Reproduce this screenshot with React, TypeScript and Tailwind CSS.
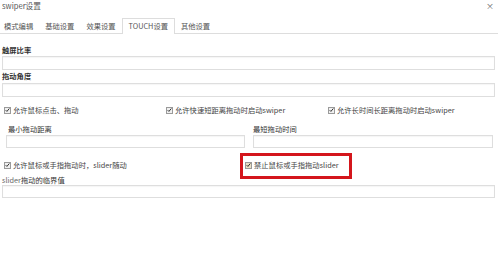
import React from 'react'

const font = { fontFamily: '"Noto Sans CJK SC", "Noto Sans", sans-serif' }

function Check({ label, tint = false }: { label: string; tint?: boolean }) {
  return (
    <div className="flex items-center h-[12px] text-[7.3px] leading-[12px] text-[#444]">
      <span
        className={`w-[7px] h-[7px] mr-[2px] flex items-center justify-center border border-[#9a9a9a] ${
          tint ? 'bg-[#e9dfc4]' : 'bg-[#f0f0f0]'
        }`}
      >
        <svg width="6" height="6" viewBox="0 0 6 6">
          <path d="M0.8 3.2 L2.3 4.7 L5.2 1.2" fill="none" stroke="#222" strokeWidth="1.1" />
        </svg>
      </span>
      <span className="whitespace-nowrap">{label}</span>
    </div>
  )
}

function Field({ className = '' }: { className?: string }) {
  return <div className={`border border-[#dedede] bg-white shadow-[inset_0_1px_1px_rgba(0,0,0,0.04)] ${className}`} />
}

export default function App() {
  const tabs = ['模式编辑', '基础设置', '效果设置', 'TOUCH设置', '其他设置']

  return (
    <div className="w-[500px] h-[271px] bg-white overflow-hidden" style={font}>
      {/* Title */}
      <div className="flex justify-between items-center h-[11px] pl-[2px] pr-[6px] text-[7.6px] text-[#555]">
        <span>swiper设置</span>
        <span className="text-[8px] text-[#666] leading-none">×</span>
      </div>

      {/* Tabs */}
      <div className="mt-[8px] h-[15px] border-b border-[#dddddd] flex ml-[-2px] mr-[2px]">
        {tabs.map((t) => (
          <div
            key={t}
            className={`px-[6px] h-[15px] leading-[14px] text-[7.3px] text-[#555] whitespace-nowrap ${
              t === 'TOUCH设置' ? 'bg-white border border-b-0 border-[#dddddd] h-[16px] -mt-px px-[5px]' : ''
            }`}
          >
            {t}
          </div>
        ))}
      </div>

      <div className="px-[2px]">
        <div className="mt-[11px] h-[10px] leading-[10px] text-[7.3px] font-bold text-[#333]">触屏比率</div>
        <Field className="mt-[1px] h-[14px] w-[493px]" />

        <div className="mt-[1px] h-[10px] leading-[10px] text-[7.3px] font-bold text-[#333]">拖动角度</div>
        <Field className="mt-[2px] h-[14px] w-[493px]" />

        <div className="mt-[7px] grid grid-cols-[162px_162px_162px] pl-[2px]">
          <Check label="允许鼠标点击、拖动" />
          <Check label="允许快速短距离拖动时启动swiper" />
          <Check label="允许长时间长距离拖动时启动swiper" />
        </div>

        <div className="mt-[8px] grid grid-cols-[247px_247px]">
          <div className="px-[4px]">
            <div className="pl-[2px] h-[10px] leading-[10px] text-[7.3px] text-[#333]">最小拖动距离</div>
            <Field className="mt-[1px] h-[13px] w-[239px]" />
          </div>
          <div className="pl-[4px] pr-[4px]">
            <div className="h-[10px] leading-[10px] text-[7.3px] text-[#333]">最短拖动时间</div>
            <Field className="mt-[1px] h-[13px] w-[240px]" />
          </div>
        </div>

        <div className="mt-[11px] grid grid-cols-[241px_241px] pl-[2px]">
          <Check label="允许鼠标或手指拖动时，slider随动" />
          <div className="relative">
            <Check label="禁止鼠标或手指拖动slider" tint />
            <div className="absolute left-[-5px] top-[-6px] w-[112px] h-[26px] border-[3px] border-[#d4161c]" />
          </div>
        </div>

        <div className="mt-[4px] h-[10px] leading-[10px] text-[7.3px] text-[#333]">
          <span className="text-[#666]">slider</span>拖动的临界值
        </div>
        <Field className="mt-0 h-[13px] w-[493px]" />
      </div>
    </div>
  )
}
